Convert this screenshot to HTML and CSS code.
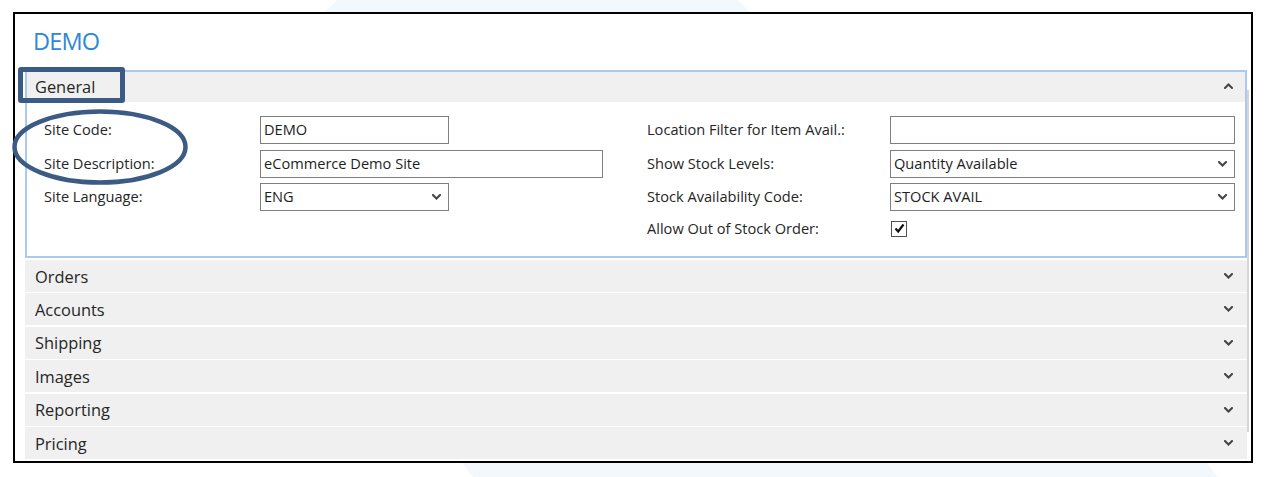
FILE: index.html
```html
<!DOCTYPE html>
<html lang="en">
<head>
<meta charset="utf-8">
<title>DEMO</title>
<link rel="stylesheet" href="styles.css">
</head>
<body>
<svg class="backdrop" width="1264" height="477" viewBox="0 0 1264 477" aria-hidden="true">
  <polygon points="337,0 738,0 760,22 315,22" fill="#f3f8fc"/>
  <polygon points="452,450 1197,450 1218,477 473,477" fill="#f3f8fc"/>
</svg>
<div class="window">
  <h1 class="title">DEMO</h1>
  <div class="sections">
    <section class="fasttab open">
      <div class="tab-head">
        <span>General</span>
        <svg class="chev" width="9" height="6" viewBox="0 0 9 6"><polyline points="1,5 4.5,1.5 8,5"/></svg>
      </div>
      <div class="tab-body">
        <div class="col col-left">
          <label class="lbl">Site Code:</label>
          <div class="input w-short">DEMO</div>
          <label class="lbl">Site Description:</label>
          <div class="input w-long">eCommerce Demo Site</div>
          <label class="lbl">Site Language:</label>
          <div class="input select w-short"><span>ENG</span><svg class="chev" width="9" height="6" viewBox="0 0 9 6"><polyline points="1,1 4.5,4.5 8,1"/></svg></div>
        </div>
        <div class="col col-right">
          <label class="lbl">Location Filter for Item Avail.:</label>
          <div class="input w-right"></div>
          <label class="lbl">Show Stock Levels:</label>
          <div class="input select w-right"><span>Quantity Available</span><svg class="chev" width="9" height="6" viewBox="0 0 9 6"><polyline points="1,1 4.5,4.5 8,1"/></svg></div>
          <label class="lbl">Stock Availability Code:</label>
          <div class="input select w-right"><span>STOCK AVAIL</span><svg class="chev" width="9" height="6" viewBox="0 0 9 6"><polyline points="1,1 4.5,4.5 8,1"/></svg></div>
          <label class="lbl">Allow Out of Stock Order:</label>
          <div class="check-wrap"><span class="checkbox"><svg width="13" height="13" viewBox="0 0 13 13"><polyline points="2.5,6.5 5.2,9.5 10.5,2.5"/></svg></span></div>
        </div>
      </div>
    </section>
    <div class="fasttab closed"><span>Orders</span><svg class="chev" width="9" height="6" viewBox="0 0 9 6"><polyline points="1,1 4.5,4.5 8,1"/></svg></div>
    <div class="fasttab closed"><span>Accounts</span><svg class="chev" width="9" height="6" viewBox="0 0 9 6"><polyline points="1,1 4.5,4.5 8,1"/></svg></div>
    <div class="fasttab closed"><span>Shipping</span><svg class="chev" width="9" height="6" viewBox="0 0 9 6"><polyline points="1,1 4.5,4.5 8,1"/></svg></div>
    <div class="fasttab closed"><span>Images</span><svg class="chev" width="9" height="6" viewBox="0 0 9 6"><polyline points="1,1 4.5,4.5 8,1"/></svg></div>
    <div class="fasttab closed"><span>Reporting</span><svg class="chev" width="9" height="6" viewBox="0 0 9 6"><polyline points="1,1 4.5,4.5 8,1"/></svg></div>
    <div class="fasttab closed"><span>Pricing</span><svg class="chev" width="9" height="6" viewBox="0 0 9 6"><polyline points="1,1 4.5,4.5 8,1"/></svg></div>
  </div>
  <div class="scroll-line"></div>
  <div class="annot-rect"></div>
  <svg class="annot-ellipse" width="178" height="78" viewBox="0 0 178 78" aria-hidden="true">
    <ellipse cx="89" cy="39" rx="85.5" ry="35.5"/>
  </svg>
</div>
</body>
</html>
```

FILE: styles.css
```css
html, body {
  margin: 0;
  padding: 0;
  background: #ffffff;
}

body {
  position: relative;
  width: 1264px;
  height: 477px;
  overflow: hidden;
  font-family: "Open Sans", "Noto Sans", "DejaVu Sans", sans-serif;
  color: #262626;
}

.backdrop {
  position: absolute;
  left: 0;
  top: 0;
  z-index: 0;
}

.window {
  position: relative;
  z-index: 1;
  box-sizing: border-box;
  width: 1240px;
  height: 451px;
  margin: 12px 0 0 13px;
  border: 2px solid #000000;
  background: #ffffff;
  padding-left: 10px;
}

.title {
  box-sizing: border-box;
  margin: 0;
  height: 56px;
  padding: 11px 0 0 8px;
  font-size: 23.5px;
  line-height: 32px;
  font-weight: 400;
  letter-spacing: -0.8px;
  color: #2f87d8;
}

.sections {
  width: 1222px;
  display: flex;
  flex-direction: column;
}

.fasttab.open {
  box-sizing: border-box;
  height: 188px;
  border: 2px solid #a9c9f3;
}

.tab-head {
  height: 30px;
  background: #f0f0f0;
  display: flex;
  align-items: center;
  justify-content: space-between;
  padding: 0 12px 2px 8px;
  box-sizing: border-box;
  font-size: 16.4px;
  color: #262626;
}

.chev {
  display: block;
  flex: none;
}

.chev polyline {
  fill: none;
  stroke: #444444;
  stroke-width: 2;
  stroke-linecap: square;
  stroke-linejoin: miter;
}

.tab-body {
  display: flex;
  padding: 14px 10px 0 17px;
}

.col {
  display: grid;
  row-gap: 5.5px;
  align-items: center;
  align-content: start;
}

.col-left {
  width: 603px;
  grid-template-columns: 216px auto;
  justify-items: start;
}

.col-right {
  grid-template-columns: 243px 345px;
  grid-template-rows: 28px 28px 28px 24px;
}

.lbl {
  font-size: 14.6px;
  line-height: 24px;
  padding-bottom: 2px;
  color: #262626;
  white-space: nowrap;
}

.input {
  box-sizing: border-box;
  height: 28px;
  border: 1px solid #7f7f7f;
  background: #ffffff;
  padding: 0 3px 2px 3px;
  font-size: 14.6px;
  line-height: 24px;
  color: #1e1e1e;
  white-space: nowrap;
}

.input.select {
  display: flex;
  align-items: center;
  justify-content: space-between;
  padding-right: 7px;
}

.input.select .chev {
  margin-top: 2px;
}

.w-short { width: 189px; }
.w-long { width: 343px; }
.w-right { width: 345px; }

.check-wrap {
  height: 24px;
  display: flex;
  align-items: center;
  padding-left: 1px;
}

.checkbox {
  box-sizing: border-box;
  width: 16px;
  height: 16px;
  border: 1px solid #505050;
  background: #ffffff;
  display: flex;
  align-items: center;
  justify-content: center;
}

.checkbox polyline {
  fill: none;
  stroke: #111111;
  stroke-width: 2.2;
}

.fasttab.closed {
  box-sizing: border-box;
  height: 32px;
  margin-top: 1.45px;
  background: #f0f0f0;
  display: flex;
  align-items: center;
  justify-content: space-between;
  padding: 0 14px 0 10px;
  font-size: 16.4px;
  color: #262626;
}

.fasttab.open + .fasttab.closed {
  margin-top: 2px;
}

.scroll-line {
  position: absolute;
  left: 1232px;
  top: 76px;
  width: 2px;
  height: 342px;
  background: #d6d6d6;
}

.annot-rect {
  position: absolute;
  left: 3px;
  top: 53px;
  box-sizing: border-box;
  width: 107px;
  height: 36px;
  border: 5px solid #3b5b85;
  border-radius: 3px;
}

.annot-ellipse {
  position: absolute;
  left: -4px;
  top: 94px;
}

.annot-ellipse ellipse {
  fill: none;
  stroke: #3b5b85;
  stroke-width: 4.5;
}
```
